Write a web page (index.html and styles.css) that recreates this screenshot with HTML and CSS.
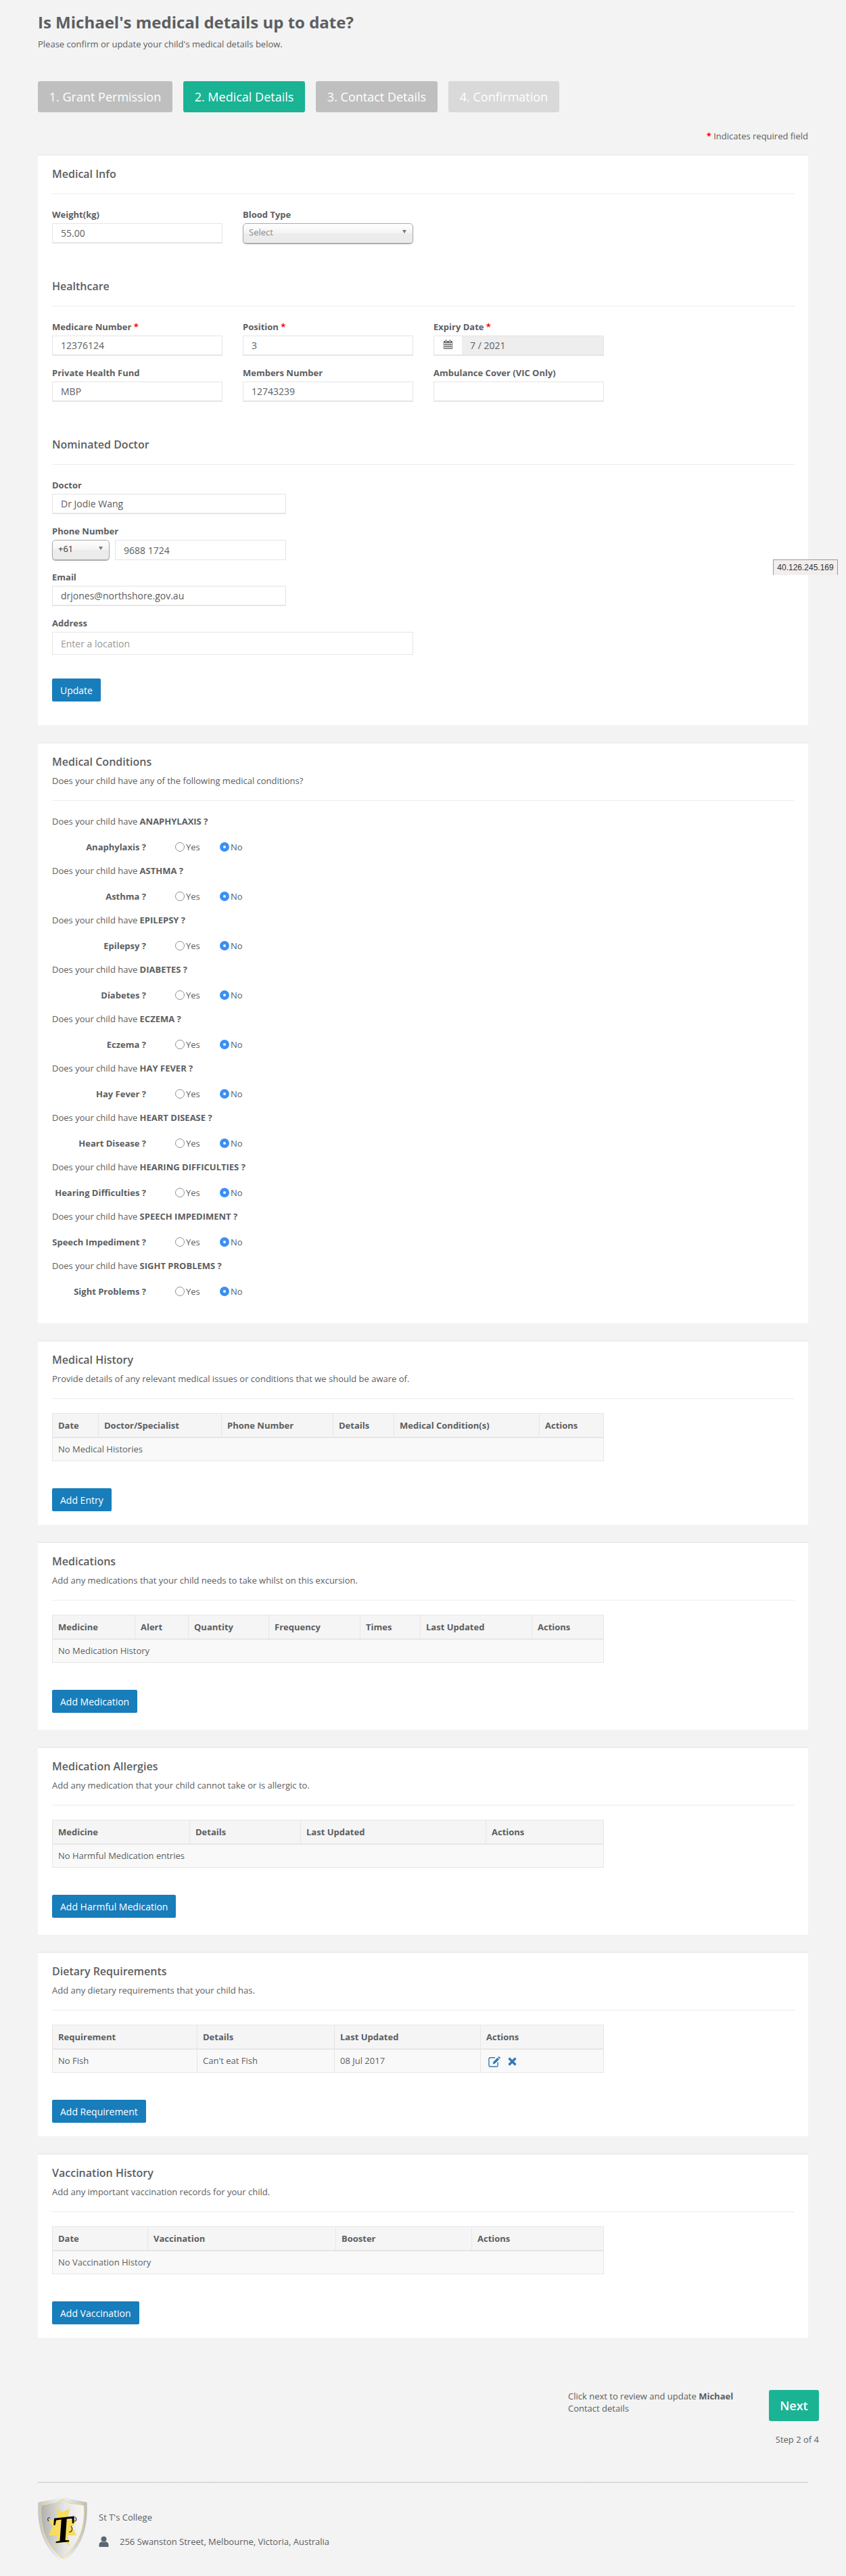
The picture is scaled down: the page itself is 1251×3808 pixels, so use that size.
FILE: index.html
```html
<!DOCTYPE html>
<html lang="en">
<head>
<meta charset="utf-8">
<title>Medical Details</title>
<link rel="stylesheet" href="styles.css">
</head>
<body>
<div class="page">
  <h1 class="page-title">Is Michael's medical details up to date?</h1>
  <p class="page-sub">Please confirm or update your child's medical details below.</p>
  <nav class="steps">
    <span class="step step-done">1. Grant Permission</span>
    <span class="step step-current">2. Medical Details</span>
    <span class="step step-done">3. Contact Details</span>
    <span class="step step-todo">4. Confirmation</span>
  </nav>
  <p class="required-note"><span class="req">*</span> Indicates required field</p>

  <div class="panels">
    <section class="panel panel-form">
      <h2 class="panel-title">Medical Info</h2>
      <hr class="rule rule-tight">
      <div class="fields">
        <div class="field"><label class="label">Weight(kg)</label><input class="input" value="55.00"></div>
        <div class="field"><label class="label">Blood Type</label>
          <div class="select-wrap"><select class="select"><option>Select</option></select></div></div>
      </div>

      <h2 class="panel-title group-title">Healthcare</h2>
      <hr class="rule rule-tight">
      <div class="fields">
        <div class="field"><label class="label">Medicare Number <span class="req">*</span></label><input class="input" value="12376124"></div>
        <div class="field"><label class="label">Position <span class="req">*</span></label><input class="input" value="3"></div>
        <div class="field"><label class="label">Expiry Date <span class="req">*</span></label>
          <div class="date">
            <span class="date-addon">
              <svg class="cal" viewBox="0 0 13 14" width="13" height="14"><path fill="#666" d="M0 2h13v12H0z"/><path fill="#fff" d="M1 5h2v2H1zM4 5h2v2H4zM7 5h2v2H7zM10 5h2v2h-2zM1 8h2v2H1zM4 8h2v2H4zM7 8h2v2H7zM10 8h2v2h-2zM1 11h2v2H1zM4 11h2v2H4zM7 11h2v2H7zM10 11h2v2h-2z"/><path fill="#666" stroke="#fff" stroke-width=".5" d="M2.500 0h2v3.500h-2zM8.500 0h2v3.500h-2z"/></svg>
            </span>
            <input class="date-input" value="7 / 2021" disabled>
          </div></div>
        <div class="field"><label class="label">Private Health Fund</label><input class="input" value="MBP"></div>
        <div class="field"><label class="label">Members Number</label><input class="input" value="12743239"></div>
        <div class="field"><label class="label">Ambulance Cover (VIC Only)</label><input class="input"></div>
      </div>

      <h2 class="panel-title group-title">Nominated Doctor</h2>
      <hr class="rule rule-tight">
      <div class="stack">
        <div class="field field-narrow"><label class="label">Doctor</label><input class="input" value="Dr Jodie Wang"></div>
        <div class="field field-narrow"><label class="label">Phone Number</label>
          <div class="phone">
            <div class="select-wrap select-code"><select class="select select-dark"><option>+61</option></select></div>
            <input class="input input-thin" value="9688 1724">
          </div></div>
        <div class="field field-narrow"><label class="label">Email</label><input class="input" value="drjones@northshore.gov.au"></div>
        <div class="field field-wide"><label class="label">Address</label><input class="input input-tall" placeholder="Enter a location"></div>
      </div>
      <button class="btn btn-update">Update</button>
    </section>

    <section class="panel panel-conditions">
      <h2 class="panel-title">Medical Conditions</h2>
      <p class="panel-sub">Does your child have any of the following medical conditions?</p>
      <hr class="rule">
      <div class="conditions">
        <p class="question">Does your child have <b>ANAPHYLAXIS ?</b></p>
        <div class="answer"><span class="answer-label">Anaphylaxis ?</span><label class="choice choice-yes"><input class="radio" type="radio" name="c1">Yes</label><label class="choice"><input class="radio" type="radio" name="c1" checked>No</label></div>
        <p class="question">Does your child have <b>ASTHMA ?</b></p>
        <div class="answer"><span class="answer-label">Asthma ?</span><label class="choice choice-yes"><input class="radio" type="radio" name="c2">Yes</label><label class="choice"><input class="radio" type="radio" name="c2" checked>No</label></div>
        <p class="question">Does your child have <b>EPILEPSY ?</b></p>
        <div class="answer"><span class="answer-label">Epilepsy ?</span><label class="choice choice-yes"><input class="radio" type="radio" name="c3">Yes</label><label class="choice"><input class="radio" type="radio" name="c3" checked>No</label></div>
        <p class="question">Does your child have <b>DIABETES ?</b></p>
        <div class="answer"><span class="answer-label">Diabetes ?</span><label class="choice choice-yes"><input class="radio" type="radio" name="c4">Yes</label><label class="choice"><input class="radio" type="radio" name="c4" checked>No</label></div>
        <p class="question">Does your child have <b>ECZEMA ?</b></p>
        <div class="answer"><span class="answer-label">Eczema ?</span><label class="choice choice-yes"><input class="radio" type="radio" name="c5">Yes</label><label class="choice"><input class="radio" type="radio" name="c5" checked>No</label></div>
        <p class="question">Does your child have <b>HAY FEVER ?</b></p>
        <div class="answer"><span class="answer-label">Hay Fever ?</span><label class="choice choice-yes"><input class="radio" type="radio" name="c6">Yes</label><label class="choice"><input class="radio" type="radio" name="c6" checked>No</label></div>
        <p class="question">Does your child have <b>HEART DISEASE ?</b></p>
        <div class="answer"><span class="answer-label">Heart Disease ?</span><label class="choice choice-yes"><input class="radio" type="radio" name="c7">Yes</label><label class="choice"><input class="radio" type="radio" name="c7" checked>No</label></div>
        <p class="question">Does your child have <b>HEARING DIFFICULTIES ?</b></p>
        <div class="answer"><span class="answer-label">Hearing Difficulties ?</span><label class="choice choice-yes"><input class="radio" type="radio" name="c8">Yes</label><label class="choice"><input class="radio" type="radio" name="c8" checked>No</label></div>
        <p class="question">Does your child have <b>SPEECH IMPEDIMENT ?</b></p>
        <div class="answer"><span class="answer-label">Speech Impediment ?</span><label class="choice choice-yes"><input class="radio" type="radio" name="c9">Yes</label><label class="choice"><input class="radio" type="radio" name="c9" checked>No</label></div>
        <p class="question">Does your child have <b>SIGHT PROBLEMS ?</b></p>
        <div class="answer"><span class="answer-label">Sight Problems ?</span><label class="choice choice-yes"><input class="radio" type="radio" name="c10">Yes</label><label class="choice"><input class="radio" type="radio" name="c10" checked>No</label></div>
      </div>
    </section>

    <section class="panel">
      <h2 class="panel-title">Medical History</h2>
      <p class="panel-sub">Provide details of any relevant medical issues or conditions that we should be aware of.</p>
      <hr class="rule">
      <table class="table">
        <colgroup><col class="w68"><col class="w182"><col class="w165"><col class="w90"><col class="w215"><col></colgroup>
        <thead><tr><th>Date</th><th>Doctor/Specialist</th><th>Phone Number</th><th>Details</th><th>Medical Condition(s)</th><th>Actions</th></tr></thead>
        <tbody><tr><td colspan="6">No Medical Histories</td></tr></tbody>
      </table>
      <button class="btn">Add Entry</button>
    </section>

    <section class="panel panel-roomy">
      <h2 class="panel-title">Medications</h2>
      <p class="panel-sub">Add any medications that your child needs to take whilst on this excursion.</p>
      <hr class="rule">
      <table class="table">
        <colgroup><col class="w122"><col class="w79"><col class="w119"><col class="w135"><col class="w89"><col class="w165"><col></colgroup>
        <thead><tr><th>Medicine</th><th>Alert</th><th>Quantity</th><th>Frequency</th><th>Times</th><th>Last Updated</th><th>Actions</th></tr></thead>
        <tbody><tr><td colspan="7">No Medication History</td></tr></tbody>
      </table>
      <button class="btn">Add Medication</button>
    </section>

    <section class="panel panel-roomy">
      <h2 class="panel-title">Medication Allergies</h2>
      <p class="panel-sub">Add any medication that your child cannot take or is allergic to.</p>
      <hr class="rule">
      <table class="table">
        <colgroup><col class="w203"><col class="w164"><col class="w274"><col></colgroup>
        <thead><tr><th>Medicine</th><th>Details</th><th>Last Updated</th><th>Actions</th></tr></thead>
        <tbody><tr><td colspan="4">No Harmful Medication entries</td></tr></tbody>
      </table>
      <button class="btn">Add Harmful Medication</button>
    </section>

    <section class="panel">
      <h2 class="panel-title">Dietary Requirements</h2>
      <p class="panel-sub">Add any dietary requirements that your child has.</p>
      <hr class="rule">
      <table class="table">
        <colgroup><col class="w214"><col class="w203"><col class="w216"><col></colgroup>
        <thead><tr><th>Requirement</th><th>Details</th><th>Last Updated</th><th>Actions</th></tr></thead>
        <tbody><tr><td>No Fish</td><td>Can't eat Fish</td><td>08 Jul 2017</td><td>
          <span class="actions">
            <svg width="19" height="17" viewBox="0 0 19 17" fill="none"><path d="M10 2.800H3.200C2 2.800 1 3.700 1 5v8.800C1 15 2 16 3.200 16H12c1.300 0 2.200-1 2.200-2.200V9.500" stroke="#337ab7" stroke-width="1.400"/><path fill="#337ab7" d="M15.600 .8l2.600 2.500-1.300 1.300-2.600-2.500zM13.600 2.800l2.600 2.500-6.300 6.300-3.200 .7 .7-3.200z"/></svg>
            <svg width="13" height="13" viewBox="0 0 13 13"><path fill="#337ab7" d="M3.200.8L6.500 4.100 9.800.8c.3-.3.7-.3 1 0l1.400 1.400c.3.3.3.7 0 1L8.900 6.500l3.300 3.300c.3.3.3.7 0 1l-1.400 1.400c-.3.3-.7.3-1 0L6.500 8.900l-3.300 3.300c-.3.3-.7.3-1 0L.8 10.800c-.3-.3-.3-.7 0-1l3.300-3.300L.8 3.200c-.3-.3-.3-.7 0-1L2.200.8c.3-.3.7-.3 1 0z"/></svg>
          </span></td></tr></tbody>
      </table>
      <button class="btn">Add Requirement</button>
    </section>

    <section class="panel">
      <h2 class="panel-title">Vaccination History</h2>
      <p class="panel-sub">Add any important vaccination records for your child.</p>
      <hr class="rule">
      <table class="table">
        <colgroup><col class="w141"><col class="w278"><col class="w201"><col></colgroup>
        <thead><tr><th>Date</th><th>Vaccination</th><th>Booster</th><th>Actions</th></tr></thead>
        <tbody><tr><td colspan="4">No Vaccination History</td></tr></tbody>
      </table>
      <button class="btn">Add Vaccination</button>
    </section>
  </div>

  <div class="next-row">
    <p class="next-text">Click next to review and update <b>Michael</b> Contact details</p>
    <button class="btn-next">Next</button>
  </div>
  <p class="step-count">Step 2 of 4</p>

  <footer class="footer">
    <svg class="logo" width="73" height="100" viewBox="0 0 73 100">
      <defs>
        <linearGradient id="sh" x1="0" x2="1" y1="0" y2="0">
          <stop offset="0" stop-color="#c4c4c4"/><stop offset=".5" stop-color="#f4f4f4"/><stop offset="1" stop-color="#bcbcbc"/>
        </linearGradient>
        <linearGradient id="sh2" x1="0" x2="1" y1="0" y2="0">
          <stop offset="0" stop-color="#b0b0b0"/><stop offset=".55" stop-color="#e6e6e6"/><stop offset="1" stop-color="#f6f6f6"/>
        </linearGradient>
      </defs>
      <path fill="url(#sh)" d="M36.500 0L46 6 72.500 11C74 40 70 75 36.500 100 3 75-1 40 .5 11L27 6z"/>
      <path fill="url(#sh2)" stroke="#ecd670" stroke-width="1" d="M36.500 6L46 12 68 15.500C70 42 65 70 36.500 94 8 70 3 42 5 15.500L27 12z"/>
      <path fill="#f6dc5f" d="M27 20L36 26 47 20 44 36 57 38 51 47 57 60 44 60 47 75 36 68 27 75 29 60 16 60 22 47 16 38 29 36z"/>
      <path fill="none" stroke="#333" stroke-width="1.200" d="M16 39c-3-3-1-6 2-5M55 33c3 2 2 6-1 6M46 55c5 0 6-5 3-9"/>
      <text class="logo-t" x="37" y="70" text-anchor="middle" transform="rotate(-6 37 50)">T</text>
    </svg>
    <div class="school">
      <p class="school-name">St T's College</p>
      <p class="school-addr">
        <svg width="15" height="16" viewBox="0 0 15 16"><circle cx="7.500" cy="4.400" r="4" fill="#5c6670"/><path fill="#5c6670" d="M.5 16v-3.500C.5 10 3 8.400 5 8.200c1.500 1 3.500 1 5 0 2 .2 4.500 1.800 4.500 4.300V16z"/></svg>
        <span>256 Swanston Street, Melbourne, Victoria, Australia</span>
      </p>
    </div>
  </footer>
</div>
<div class="ip-tag">40.126.245.169</div>
</body>
</html>
```
FILE: styles.css
```css
* { box-sizing: border-box; }
html, body { margin: 0; padding: 0; }
body {
  background: #f3f3f3;
  color: #5b5e62;
  font-family: "Open Sans", sans-serif;
  font-size: 13px;
  line-height: 18px;
  position: relative;
}
p { margin: 0; }
.page { width: 1251px; height: 3808px; padding: 18px 56px 0; overflow: hidden; }
.page-title { margin: 0; font-size: 24px; line-height: 30px; font-weight: 700; color: #5c5e61; }
.page-sub { margin-top: 8px; }
.steps { display: flex; gap: 16px; margin-top: 46px; }
.step {
  height: 46px; display: flex; align-items: center; justify-content: center;
  color: #fff; font-size: 18px; font-weight: 400; border-radius: 3px; white-space: nowrap;
}
.step:nth-child(1) { width: 199px; }
.step:nth-child(2) { width: 180px; }
.step:nth-child(3) { width: 180px; }
.step:nth-child(4) { width: 164px; }
.step-done { background: #bfbfbf; }
.step-current { background: #1ab394; }
.step-todo { background: #d9d9d9; }
.required-note { margin-top: 26px; text-align: right; }
.req { color: #f00; font-weight: 700; }

.panels { display: grid; gap: 25px; margin-top: 18px; }
.panel { background: #fff; border-top: 2px solid #ececec; padding: 16px 20px 20px 21px; }
.panel-form { padding-bottom: 35px; }
.panel-conditions { padding-bottom: 38px; }
.panel-roomy { padding-bottom: 25px; }
.panel-title { margin: 0; font-size: 16px; line-height: 22px; font-weight: 600; color: #5c5e61; }
.group-title { margin-top: 52px; }
.panel-sub { margin-top: 8px; }
.rule { border: 0; border-top: 1px solid #ececec; margin: 20px 0 21px; height: 0; }
.rule-tight { margin-top: 18px; }

.fields { display: grid; grid-template-columns: repeat(3, 252px); gap: 16px 30px; }
.stack { display: grid; gap: 16px; }
.field-narrow { width: 346px; }
.field-wide { width: 534px; }
.label { display: block; font-weight: 700; margin-bottom: 4px; color: #5c5e61; }
.input {
  display: block; width: 100%; height: 30px; padding: 0 12px;
  border: 1px solid #e5e5e5; border-bottom-width: 2px; background: #fff; outline: 0;
  font: 14px "Open Sans", sans-serif; color: #5b5e62;
}
.input-thin { border-bottom-width: 1px; }
.input-tall { height: 34px; border-bottom-width: 1px; }
.input::placeholder { color: #999; opacity: 1; }
.select-wrap { position: relative; height: 30px; }
.select-wrap::after {
  content: ""; position: absolute; right: 10px; top: 10px;
  border: 3px solid transparent; border-top: 5px solid #777; border-bottom: 0;
}
.select {
  appearance: none; display: block; width: 100%; height: 30px; padding: 0 8px 4px;
  border: 1px solid #aaa; border-radius: 5px;
  background: linear-gradient(#fff, #f3f3f3 48%, #ececec 52%, #ebebeb);
  box-shadow: 0 1px 1px #aaa;
  font: 13px "Open Sans", sans-serif; color: #8a8a8a;
}
.select-dark { color: #333; }
.select-code { flex: none; width: 85px; }
.phone { display: flex; gap: 8px; }
.date { display: flex; height: 30px; border: 1px solid #e5e5e5; border-bottom-width: 2px; }
.date-addon { flex: none; width: 41px; display: flex; align-items: center; justify-content: center; padding-bottom: 3px; }
.date-input {
  flex: 1; min-width: 0; border: 0; background: #eee; padding: 0 12px;
  font: 14px "Open Sans", sans-serif; color: #5b5e62; opacity: 1;
}
.btn {
  display: block; height: 34px; padding: 0 12px; margin-top: 40px; border: 0; border-radius: 2px;
  background: #187dbb; color: #fff;
  font: 400 14px "Open Sans", sans-serif;
}
.btn-update { margin-top: 35px; }

.question { margin-bottom: 20px; }
.question b, .answer-label { font-weight: 700; }
.answer { display: flex; align-items: center; height: 18px; margin-bottom: 17px; }
.answer:last-child { margin-bottom: 0; }
.answer-label { width: 139px; text-align: right; flex: none; margin-right: 43px; white-space: nowrap; }
.choice { display: flex; align-items: center; gap: 2px; font-size: 13px; }
.choice-yes { width: 66px; }
.radio {
  appearance: none; margin: 0; width: 14px; height: 14px; border-radius: 50%;
  border: 1px solid #8f8f8f; background: #fff;
}
.radio:checked { border: 5px solid #3b8ff3; background: #fff; }

.table {
  width: 816px; border-collapse: collapse; table-layout: fixed; background: #f9f9f9;
}
.table th, .table td { height: 35px; padding: 0 8px; text-align: left; border: 1px solid #e6e6e6; }
.table th { background: #f5f5f5; font-weight: 700; border-bottom-width: 2px; color: #5c5e61; }
.w68 { width: 68px; } .w182 { width: 182px; } .w165 { width: 165px; } .w90 { width: 90px; }
.w215 { width: 215px; } .w122 { width: 122px; } .w79 { width: 79px; } .w119 { width: 119px; }
.w135 { width: 135px; } .w89 { width: 89px; } .w203 { width: 203px; } .w164 { width: 164px; }
.w274 { width: 274px; } .w214 { width: 214px; } .w216 { width: 216px; } .w141 { width: 141px; }
.w278 { width: 278px; } .w201 { width: 201px; }
.actions { display: flex; align-items: center; gap: 10px; padding-left: 3px; padding-top: 2px; }

.next-row { display: flex; margin: 77px -16px 0 0; justify-content: flex-end; }
.next-text { width: 260px; margin-right: 37px; }
.btn-next {
  width: 74px; height: 46px; border: 0; border-radius: 3px; background: #1ab394; color: #fff;
  font: 600 18px "Open Sans", sans-serif;
}
.step-count { margin: 18px -16px 0 0; text-align: right; }

.footer {
  display: flex; gap: 17px; align-items: flex-start; margin-top: 54px; padding-top: 18px;
  border-top: 1px dotted #999;
}
.logo { flex: none; }
.logo-t { font-family: "Liberation Serif", serif; font-weight: 700; font-style: italic; font-size: 56px; fill: #000; }
.school { padding-top: 24px; }
.school-addr { display: flex; align-items: center; gap: 16px; margin-top: 18px; }

.ip-tag {
  position: absolute; left: 1143px; top: 827px; width: 96px; height: 23px;
  background: #f2eeee; border: 1px solid #999; border-bottom: 0; color: #333;
  font: 12px/23px "Liberation Sans", sans-serif; text-align: center;
}
```
